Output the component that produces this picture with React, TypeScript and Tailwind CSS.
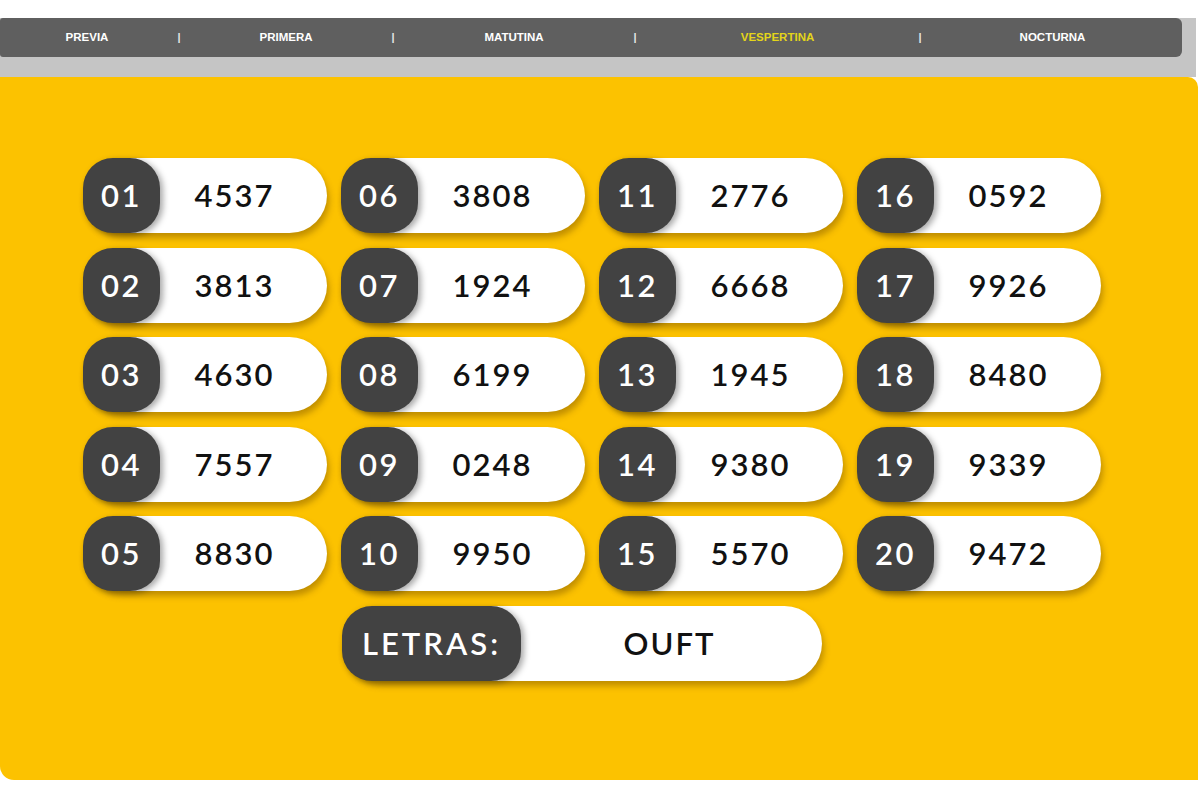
import React from 'react';

const results: [string, string][] = [
  ['01', '4537'], ['06', '3808'], ['11', '2776'], ['16', '0592'],
  ['02', '3813'], ['07', '1924'], ['12', '6668'], ['17', '9926'],
  ['03', '4630'], ['08', '6199'], ['13', '1945'], ['18', '8480'],
  ['04', '7557'], ['09', '0248'], ['14', '9380'], ['19', '9339'],
  ['05', '8830'], ['10', '9950'], ['15', '5570'], ['20', '9472'],
];

const tabs = [
  { label: 'PREVIA', w: 'w-[174px]' },
  { label: 'PRIMERA', w: 'w-[204px]' },
  { label: 'MATUTINA', w: 'w-[232px]' },
  { label: 'VESPERTINA', w: 'w-[275px]', active: true },
  { label: 'NOCTURNA', w: 'w-[255px]' },
];

const font = { fontFamily: 'Lato, "Noto Sans", sans-serif' };

function Chip({ pos, value, wide }: { pos: string; value: string; wide?: boolean }) {
  return (
    <div
      className={`flex h-[75px] items-stretch rounded-full bg-white shadow-[2px_5px_6px_rgba(120,80,0,0.45)] ${wide ? 'w-[480px]' : 'w-[244px]'}`}
    >
      <div className={`flex min-w-[70px] items-center justify-center rounded-[30px] bg-[#424242] shadow-[3px_2px_6px_rgba(0,0,0,0.35)] ${wide ? 'px-[20px]' : 'px-[18px]'}`}>
        <span className={`text-[31px] font-semibold text-white ${wide ? 'tracking-[3px]' : 'tracking-[2.5px]'}`}>{pos}</span>
      </div>
      <div className={`flex flex-1 items-center justify-center ${wide ? 'pr-[4px]' : 'pr-[18px]'}`}>
        <span className="text-[31px] font-semibold tracking-[2px] text-[#111]">{value}</span>
      </div>
    </div>
  );
}

export default function App() {
  return (
    <div className="h-[800px] w-[1200px] overflow-hidden bg-white pt-[18px]" style={font}>
      {/* top tabs */}
      <div className="h-[59px] w-[1196px] bg-[#c5c5c5]">
        <nav className="flex h-[39px] w-[1182px] items-center rounded-r-[6px] rounded-l-[3px] bg-[#5f5f5f]">
          {tabs.map((t, i) => (
            <React.Fragment key={t.label}>
              {i > 0 && <span className="w-[10px] text-center text-[11px] font-bold text-[#e6e6e6]" style={{ fontFamily: '"Liberation Sans", sans-serif' }}>|</span>}
              <span
                className={`${t.w} text-center text-[11.5px] font-bold ${t.active ? 'text-[#e4d51a]' : 'text-white'}`}
                style={{ fontFamily: '"Liberation Sans", sans-serif' }}
              >
                {t.label}
              </span>
            </React.Fragment>
          ))}
        </nav>
      </div>

      {/* results panel */}
      <div className="h-[703px] w-[1198px] rounded-tr-[10px] rounded-bl-[14px] bg-[#fcc200] pl-[83px] pt-[81px]">
        <div className="grid w-fit grid-cols-[244px_244px_244px_244px] gap-x-[14px] gap-y-[14.5px]">
          {results.map(([p, v]) => (
            <Chip key={p} pos={p} value={v} />
          ))}
        </div>
        <div className="mt-[15px] pl-[259px]">
          <Chip pos="LETRAS:" value="OUFT" wide />
        </div>
      </div>
    </div>
  );
}
